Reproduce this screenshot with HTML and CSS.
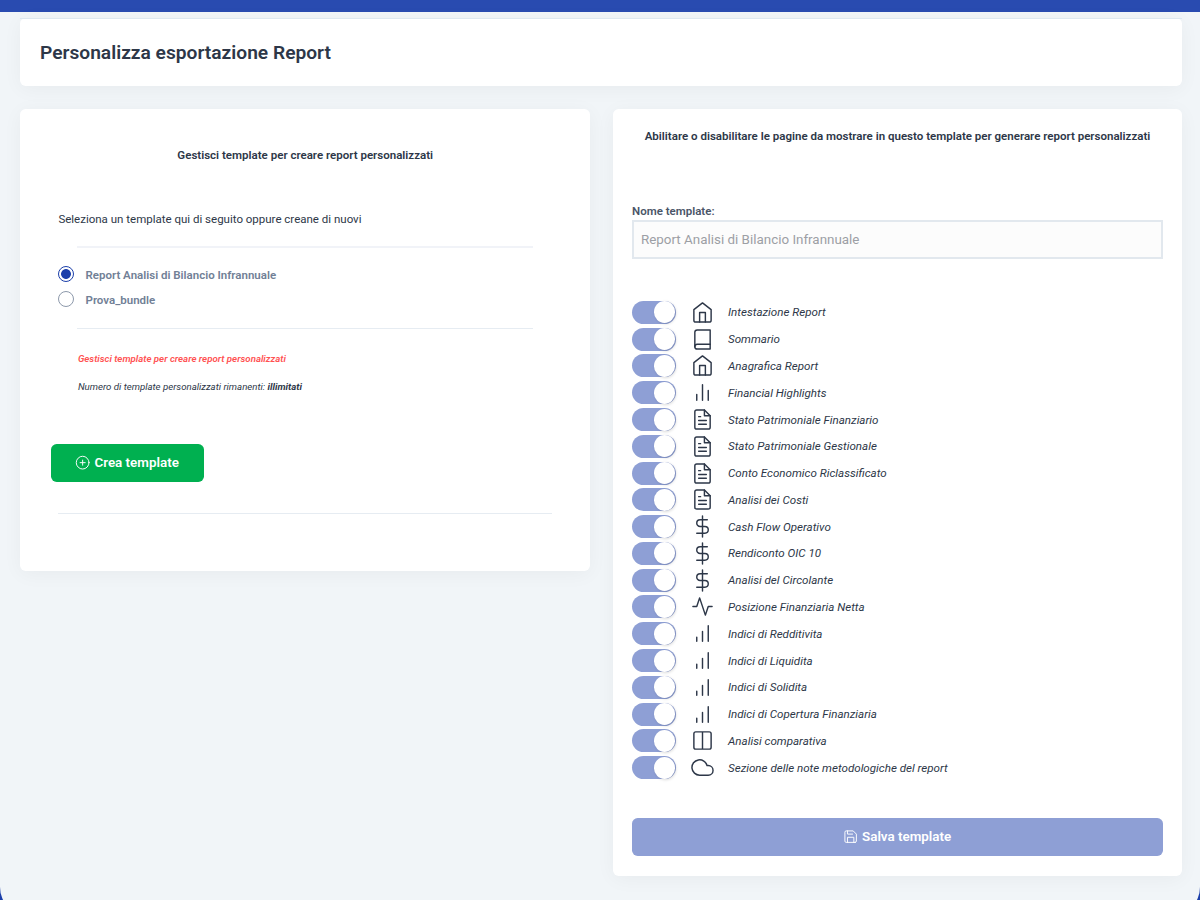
FILE: index.html
```html
<!DOCTYPE html>
<html lang="it">
<head>
  <meta charset="UTF-8">
  <title>Personalizza esportazione Report</title>
  <meta name="viewport" content="width=device-width, initial-scale=1.0">
  <link rel="stylesheet" href="styles.css">
</head>
<body>
  <!-- Icon set -->
  <svg class="sprite" xmlns="http://www.w3.org/2000/svg">
    <symbol id="home" viewBox="0 0 24 24"><path d="M3 9l9-7 9 7v11a2 2 0 0 1-2 2H5a2 2 0 0 1-2-2z"/><path d="M9 22V12h6v10"/></symbol>
    <symbol id="book" viewBox="0 0 24 24"><path d="M4 19.5A2.5 2.5 0 0 1 6.5 17H20"/><path d="M6.500 2H20v20H6.500A2.500 2.500 0 0 1 4 19.500v-15A2.500 2.500 0 0 1 6.500 2z"/></symbol>
    <symbol id="bar-chart-2" viewBox="0 0 24 24"><path d="M18 20V10M12 20V4M6 20v-6"/></symbol>
    <symbol id="bar-chart" viewBox="0 0 24 24"><path d="M12 20V10M18 20V4M6 20v-4"/></symbol>
    <symbol id="file-text" viewBox="0 0 24 24"><path d="M14 2H6a2 2 0 0 0-2 2v16a2 2 0 0 0 2 2h12a2 2 0 0 0 2-2V8z"/><path d="M14 2v6h6M16 13H8M16 17H8M10 9H8"/></symbol>
    <symbol id="dollar" viewBox="0 0 24 24"><path d="M12 1v22"/><path d="M17 5H9.500a3.500 3.500 0 0 0 0 7h5a3.500 3.500 0 0 1 0 7H6"/></symbol>
    <symbol id="activity" viewBox="0 0 24 24"><path d="M22 12h-4l-3 9L9 3l-3 9H2"/></symbol>
    <symbol id="columns" viewBox="0 0 24 24"><path d="M12 3h7a2 2 0 0 1 2 2v14a2 2 0 0 1-2 2h-7m0-18H5a2 2 0 0 0-2 2v14a2 2 0 0 0 2 2h7m0-18v18"/></symbol>
    <symbol id="cloud" viewBox="0 0 24 24"><path d="M18 10h-1.260A8 8 0 1 0 9 20h9a5 5 0 0 0 0-10z"/></symbol>
    <symbol id="plus-circle" viewBox="0 0 24 24"><circle cx="12" cy="12" r="10"/><path d="M12 8v8M8 12h8"/></symbol>
    <symbol id="save" viewBox="0 0 24 24"><path d="M19 21H5a2 2 0 0 1-2-2V5a2 2 0 0 1 2-2h11l5 5v11a2 2 0 0 1-2 2z"/><path d="M17 21v-8H7v8M7 3v5h8"/></symbol>
  </svg>

  <div class="content">
    <header class="box page-title">
      <h1>Personalizza esportazione Report</h1>
    </header>

    <div class="columns">
      <!-- Template list -->
      <section class="box templates">
        <h2>Gestisci template per creare report personalizzati</h2>
        <p class="intro">Seleziona un template qui di seguito oppure creane di nuovi</p>
        <hr class="thick">
        <div class="radios">
          <label><input type="radio" name="template" checked>Report Analisi di Bilancio Infrannuale</label>
          <label><input type="radio" name="template">Prova_bundle</label>
        </div>
        <hr>
        <p class="warning">Gestisci template per creare report personalizzati</p>
        <p class="remaining">Numero di template personalizzati rimanenti: <b>illimitati</b></p>
        <button class="btn btn-create"><svg class="icon"><use href="#plus-circle"/></svg>Crea template</button>
        <hr class="wide">
      </section>

      <!-- Pages of the selected template -->
      <section class="box pages">
        <h2>Abilitare o disabilitare le pagine da mostrare in questo template per generare report personalizzati</h2>
        <label class="name-label" for="name">Nome template:</label>
        <input class="name" id="name" type="text" value="Report Analisi di Bilancio Infrannuale" disabled>

        <ul class="page-list">
          <li><span class="switch"></span><svg class="icon"><use href="#home"/></svg>Intestazione Report</li>
          <li><span class="switch"></span><svg class="icon"><use href="#book"/></svg>Sommario</li>
          <li><span class="switch"></span><svg class="icon"><use href="#home"/></svg>Anagrafica Report</li>
          <li><span class="switch"></span><svg class="icon"><use href="#bar-chart-2"/></svg>Financial Highlights</li>
          <li><span class="switch"></span><svg class="icon"><use href="#file-text"/></svg>Stato Patrimoniale Finanziario</li>
          <li><span class="switch"></span><svg class="icon"><use href="#file-text"/></svg>Stato Patrimoniale Gestionale</li>
          <li><span class="switch"></span><svg class="icon"><use href="#file-text"/></svg>Conto Economico Riclassificato</li>
          <li><span class="switch"></span><svg class="icon"><use href="#file-text"/></svg>Analisi dei Costi</li>
          <li><span class="switch"></span><svg class="icon"><use href="#dollar"/></svg>Cash Flow Operativo</li>
          <li><span class="switch"></span><svg class="icon"><use href="#dollar"/></svg>Rendiconto OIC 10</li>
          <li><span class="switch"></span><svg class="icon"><use href="#dollar"/></svg>Analisi del Circolante</li>
          <li><span class="switch"></span><svg class="icon"><use href="#activity"/></svg>Posizione Finanziaria Netta</li>
          <li><span class="switch"></span><svg class="icon"><use href="#bar-chart"/></svg>Indici di Redditivita</li>
          <li><span class="switch"></span><svg class="icon"><use href="#bar-chart"/></svg>Indici di Liquidita</li>
          <li><span class="switch"></span><svg class="icon"><use href="#bar-chart"/></svg>Indici di Solidita</li>
          <li><span class="switch"></span><svg class="icon"><use href="#bar-chart"/></svg>Indici di Copertura Finanziaria</li>
          <li><span class="switch"></span><svg class="icon"><use href="#columns"/></svg>Analisi comparativa</li>
          <li><span class="switch"></span><svg class="icon"><use href="#cloud"/></svg>Sezione delle note metodologiche del report</li>
        </ul>

        <button class="btn btn-save" disabled><svg class="icon"><use href="#save"/></svg>Salva template</button>
      </section>
    </div>
  </div>
</body>
</html>
```
FILE: styles.css
```css
* {
  box-sizing: border-box;
}

html {
  overflow: hidden;
}

body {
  margin: 0;
  height: 900px;
  overflow: hidden;
  padding-top: 12px;
  font-family: Roboto, sans-serif;
  font-size: 11.5px;
  line-height: 18px;
  color: #2d3748;
  background: linear-gradient(#294bb0 12px, #1c3faa 12px);
}

h1, h2, p, ul {
  margin: 0;
  padding: 0;
}

.sprite {
  display: none;
}

.icon {
  fill: none;
  stroke: currentColor;
  stroke-width: 1.5;
  stroke-linecap: round;
  stroke-linejoin: round;
  flex: none;
}

/* Rounded page surface, runs past the bottom of the window */
.content {
  height: 904px;
  padding: 6px 18px 0 20px;
  border-radius: 0 0 29px 29px;
  background: #f1f5f8;
}

.box {
  background: #fff;
  border-radius: 5.7px;
  box-shadow: 0 3px 20px rgba(0, 0, 0, 0.043);
}

.page-title {
  position: relative;
  height: 68px;
  padding: 2px 20px 0;
  display: flex;
  align-items: center;
}

.page-title::before {
  content: "";
  position: absolute;
  top: 0;
  left: 0;
  right: 0;
  height: 1px;
  background: #dde7f0;
}

.page-title h1 {
  font-size: 19.2px;
  font-weight: 600;
}

.columns {
  display: grid;
  grid-template-columns: 570px 569px;
  gap: 23px;
  align-items: start;
  margin-top: 23px;
}

h2 {
  font-size: 11.54px;
  font-weight: 600;
  text-align: center;
}

hr {
  height: 1px;
  margin: 0 19px;
  border: 0;
  background: #e6ecf2;
}

.thick {
  height: 2px;
  background: #f1f3f8;
}

/* Left column */
.templates {
  height: 462px;
  padding: 37px 38px 0 38.4px;
}

.intro {
  margin: 46px 0 18px;
}

.radios {
  padding: 13px 0 17px;
}

.radios label {
  display: flex;
  align-items: center;
  height: 25px;
  padding-top: 2px;
  font-weight: 600;
  color: #718096;
}

.radios input {
  appearance: none;
  width: 16px;
  height: 16px;
  margin: -2px 11.500px 0 -0.4px;
  border: 1px solid #8d99ab;
  border-radius: 50%;
  background: #fff;
}

.radios input:checked {
  border-color: #1c3faa;
  background: radial-gradient(circle, #1c3faa 4.500px, #fff 5.300px);
}

.warning,
.remaining {
  margin-left: 19.5px;
  font-size: 9.660px;
  font-style: italic;
}

.warning {
  margin-top: 21px;
  font-weight: 600;
  color: #ff5252;
}

.remaining {
  margin-top: 10px;
}

.btn {
  display: flex;
  align-items: center;
  justify-content: center;
  height: 38px;
  padding: 0 1px 1px 0;
  border: 0;
  border-radius: 5.7px;
  font-family: inherit;
  font-size: 13.4px;
  font-weight: 600;
  color: #fff;
}

.btn .icon {
  width: 15.3px;
  height: 15.3px;
  margin: 1px 4px 0 0;
}

.btn-create {
  width: 153px;
  margin: 48px 0 31px -7.4px;
  background: #00b050;
}

.wide {
  margin: 0;
}

/* Right column */
.pages {
  height: 767px;
  padding: 18px 19px 0;
}

.name-label {
  display: block;
  margin-top: 57px;
  font-weight: 600;
  color: #4a5568;
}

.name {
  display: block;
  width: 100%;
  height: 39px;
  padding: 0 7px;
  border: 2px solid #e2e8ee;
  font-family: inherit;
  font-size: 13.4px;
  color: #9c9fa5;
  background: #fcfcfc;
}

.page-list {
  margin-top: 40px;
  list-style: none;
}

.page-list li {
  display: flex;
  align-items: center;
  height: 26.79px;
  font-size: 11.6px;
  font-style: italic;
}

.page-list .icon {
  width: 23px;
  height: 23px;
  margin: 0 14.500px 0 15px;
}

.switch {
  display: flex;
  justify-content: flex-end;
  width: 43.5px;
  height: 23px;
  padding: 0.500px;
  border-radius: 12px;
  background: #8e9fd5;
}

.switch::after {
  content: "";
  width: 21.500px;
  height: 22px;
  border-radius: 50%;
  background: #fff;
  box-shadow: 1px 1px 3px rgba(0, 0, 0, 0.15);
}

.btn-save {
  width: 100%;
  margin-top: 37px;
  background: #8e9fd5;
}
```
